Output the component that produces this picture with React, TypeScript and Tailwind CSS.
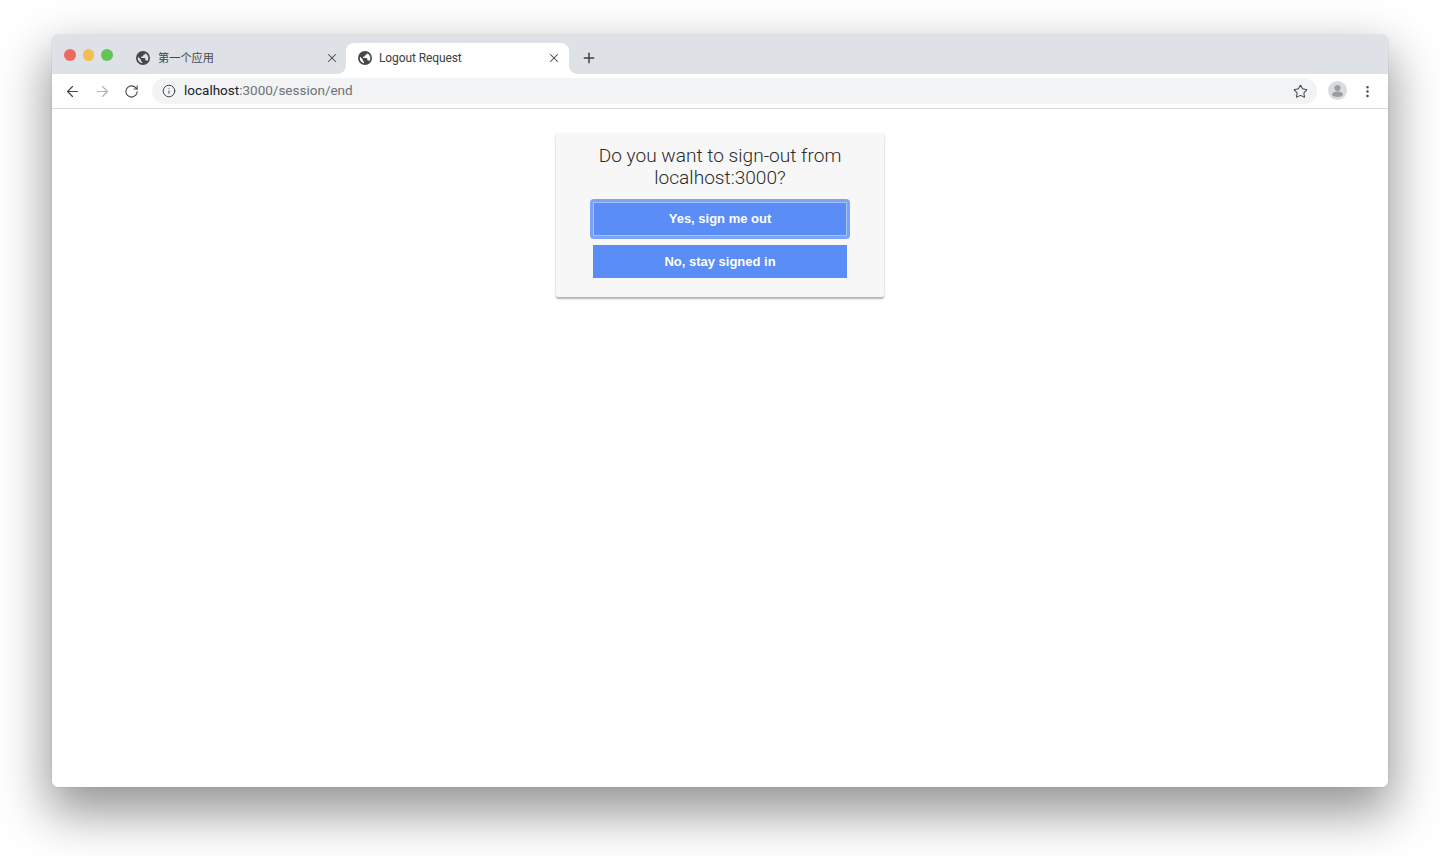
import { ArrowLeft, ArrowRight, Info, MoreVertical, Plus, RotateCw, Star, X } from "lucide-react";

const sans = "font-['Liberation_Sans','Noto_Sans_CJK_SC',sans-serif]";

// chrome's default favicon, dark disc with the lighter land cut out
function Globe() {
  return (
    <svg width="14" height="14" viewBox="0 0 16 16" className="mb-[1px] shrink-0 text-[#45474b]">
      <path
        fill="currentColor"
        fillRule="evenodd"
        d="M8 0a8 8 0 1 0 0 16A8 8 0 0 0 8 0zM2.300 6.600 5.500 9.800v.8c0 .9.700 1.600 1.500 1.600v1.800A6 6 0 0 1 2.300 6.600zM10.700 2.600c0 .9-.7 1.600-1.600 1.600H8.300v1.300c0 .5-.4.9-.9.9H6v1.500h3.700c.5 0 .9.4.9.9v1.900h.8c.7 0 1.200.4 1.400 1A6 6 0 0 0 10.700 2.600z"
      />
    </svg>
  );
}

function Avatar() {
  return (
    <svg width="19" height="19" viewBox="0 0 19 19" className="mb-[1px] ml-[11px] shrink-0">
      <circle cx="9.5" cy="9.500" r="9.500" fill="#dadbdd" />
      <circle cx="9.5" cy="7" r="3" fill="#9b9c9e" />
      <path d="M4 14c0-2.300 2.800-3.400 5.500-3.400S15 11.700 15 14c-1.200 1.200-3.200 2-5.500 2S5.200 15.200 4 14z" fill="#9b9c9e" />
    </svg>
  );
}

function Tab({ title, active, cjk }: { title: string; active?: boolean; cjk?: boolean }) {
  return (
    <div
      className={`relative flex h-[31px] items-center rounded-t-lg ${
        active
          ? "w-[223px] bg-white pl-[12px] pr-[8px] text-[#3c4043]"
          : "w-[221px] pl-[11px] pr-[7px] text-[#45474b]"
      }`}
    >
      {active && (
        <>
          <span className="absolute bottom-0 -left-2 h-2 w-2 bg-[radial-gradient(circle_at_0_0,transparent_7.500px,white_8px)]" />
          <span className="absolute bottom-0 -right-2 h-2 w-2 bg-[radial-gradient(circle_at_100%_0,transparent_7.500px,white_8px)]" />
        </>
      )}
      <Globe />
      <span
        className={`flex-1 font-['Roboto','Noto_Sans_CJK_SC',sans-serif] ${
          cjk ? "ml-[8px] pt-[2px] text-[11.2px]" : "ml-[7px] pb-[1px] text-[12px] tracking-[-0.1px]"
        }`}
      >
        {title}
      </span>
      <X size={14} strokeWidth={1.8} className="mb-[1px] text-[#45474b]" />
    </div>
  );
}

function BrowserBar() {
  return (
    <div className="shrink-0">
      <div className="flex h-[39px] items-end rounded-t-[6px] bg-[#dee1e6] pl-[73px]">
        <Tab title="第一个应用" cjk />
        <Tab title="Logout Request" active />
        <Plus size={16} strokeWidth={2.2} className="mb-[8px] ml-3 text-[#3c4043]" />
        <div className="absolute left-[64px] top-[49px] flex gap-[7px]">
          <span className="h-[11.5px] w-[11.5px] rounded-full bg-[#ee6a5f]" />
          <span className="h-[11.5px] w-[11.5px] rounded-full bg-[#f5bd4f]" />
          <span className="h-[11.5px] w-[11.5px] rounded-full bg-[#61c454]" />
        </div>
      </div>
      <div className="flex h-[35px] items-center border-b border-[#d9dadc] bg-white pl-[12px] pr-[13px]">
        <ArrowLeft size={17} strokeWidth={1.7} className="text-[#45474b]" />
        <ArrowRight size={17} strokeWidth={1.7} className="ml-[13px] text-[#b1b3b6]" />
        <RotateCw size={15} strokeWidth={1.7} className="ml-[13px] text-[#45474b]" />
        <div className="ml-[13px] flex h-[26px] flex-1 items-center rounded-full bg-[#f1f3f4] pl-[10px] pr-[9px]">
          <Info size={14} strokeWidth={1.7} className="text-[#45474b]" />
          <span className="ml-[8px] flex-1 pb-[1px] font-['Roboto',sans-serif] text-[13.5px] text-[#6f7276]">
            <span className="text-[#202124]">localhost</span>:3000/session/end
          </span>
          <Star size={15} strokeWidth={1.7} className="text-[#45474b]" />
        </div>
        <Avatar />
        <MoreVertical size={15} strokeWidth={2} className="ml-[13px] text-[#45474b]" />
      </div>
    </div>
  );
}

function LogoutCard() {
  const buttonClass = `w-full bg-[#5a8df5] text-[13px] font-bold text-white ${sans}`;
  return (
    <div className="w-[328px] rounded-[2px] bg-[#f7f7f7] px-[37px] pb-[19px] pt-[12px] shadow-[0_2px_2px_rgba(0,0,0,0.3),0_0_1px_rgba(0,0,0,0.12)]">
      <h1 className="-mx-[20px] mb-[13px] text-center font-['Roboto',sans-serif] text-[19.1px] font-light leading-[22px] text-[#2a2a2a]">
        Do you want to sign-out from localhost:3000?
      </h1>
      <div className="flex flex-col gap-[9px]">
        <button className={`${buttonClass} h-[34px] rounded-[1px] border border-[#a5c1fa] outline-[3px] outline-solid outline-[#7ba4f7]`}>
          Yes, sign me out
        </button>
        <button className={`${buttonClass} h-[33px]`}>No, stay signed in</button>
      </div>
    </div>
  );
}

export default function App() {
  return (
    <div className="relative h-[856px] overflow-hidden bg-white px-[52px] pb-[69px] pt-[35px]">
      <div className="flex h-full flex-col rounded-[6px] bg-white shadow-[0_22px_50px_4px_rgba(0,0,0,0.42),0_0_1px_rgba(0,0,0,0.4)]">
        <BrowserBar />
        <main className="flex flex-1 items-start justify-center rounded-b-[6px] bg-white pt-[24px]">
          <LogoutCard />
        </main>
      </div>
    </div>
  );
}
